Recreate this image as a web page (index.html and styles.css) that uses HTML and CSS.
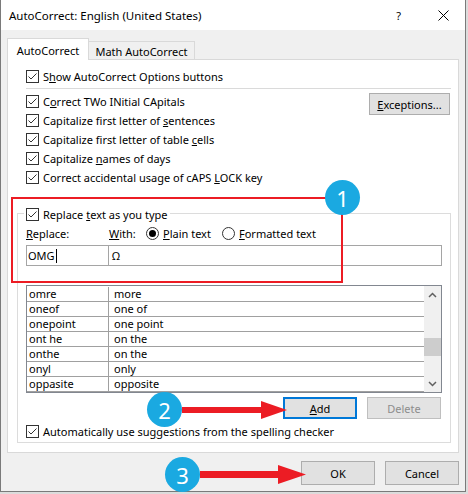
FILE: index.html
```html
<!DOCTYPE html>
<html>
<head>
<meta charset="utf-8">
<title>AutoCorrect</title>
<link rel="stylesheet" href="styles.css">
</head>
<body>
<div class="dialog">
  <div class="titlebar">
    <span class="title">AutoCorrect: English (United States)</span>
    <span class="help">?</span>
    <svg class="close" width="11" height="11" viewBox="0 0 11 11"><path d="M0.5 0.5 L10.5 10.5 M10.5 0.5 L0.5 10.5" stroke="#000" stroke-width="1" fill="none"/></svg>
  </div>
  <div class="body">
    <div class="tabs">
      <div class="tab active">AutoCorrect</div>
      <div class="tab">Math AutoCorrect</div>
    </div>
    <div class="panel">
      <div class="check-row show-row">
        <svg class="cb" width="13" height="13" viewBox="0 0 13 13"><rect x="0.5" y="0.5" width="12" height="12" fill="#fff" stroke="#333"/><path d="M2.5 6.5 L5 9 L10.5 3.5" fill="none" stroke="#333"/></svg>
        <span>S<u>h</u>ow AutoCorrect Options buttons</span>
      </div>
      <div class="sep"></div>
      <div class="top">
        <div class="checks">
          <div class="check-row">
            <svg class="cb" width="13" height="13" viewBox="0 0 13 13"><rect x="0.5" y="0.5" width="12" height="12" fill="#fff" stroke="#333"/><path d="M2.5 6.5 L5 9 L10.5 3.5" fill="none" stroke="#333"/></svg>
            <span>C<u>o</u>rrect TWo INitial CApitals</span>
          </div>
          <div class="check-row">
            <svg class="cb" width="13" height="13" viewBox="0 0 13 13"><rect x="0.5" y="0.5" width="12" height="12" fill="#fff" stroke="#333"/><path d="M2.5 6.5 L5 9 L10.5 3.5" fill="none" stroke="#333"/></svg>
            <span>Capitalize first letter of <u>s</u>entences</span>
          </div>
          <div class="check-row">
            <svg class="cb" width="13" height="13" viewBox="0 0 13 13"><rect x="0.5" y="0.5" width="12" height="12" fill="#fff" stroke="#333"/><path d="M2.5 6.5 L5 9 L10.5 3.5" fill="none" stroke="#333"/></svg>
            <span>Capitalize first letter of table <u>c</u>ells</span>
          </div>
          <div class="check-row">
            <svg class="cb" width="13" height="13" viewBox="0 0 13 13"><rect x="0.5" y="0.5" width="12" height="12" fill="#fff" stroke="#333"/><path d="M2.5 6.5 L5 9 L10.5 3.5" fill="none" stroke="#333"/></svg>
            <span>Capitalize <u>n</u>ames of days</span>
          </div>
          <div class="check-row">
            <svg class="cb" width="13" height="13" viewBox="0 0 13 13"><rect x="0.5" y="0.5" width="12" height="12" fill="#fff" stroke="#333"/><path d="M2.5 6.5 L5 9 L10.5 3.5" fill="none" stroke="#333"/></svg>
            <span>Correct accidental usage of cAPS <u>L</u>OCK key</span>
          </div>
        </div>
        <div class="btn exceptions"><span><u>E</u>xceptions...</span></div>
      </div>
      <div class="group">
        <div class="check-row legend">
          <svg class="cb" width="13" height="13" viewBox="0 0 13 13"><rect x="0.5" y="0.5" width="12" height="12" fill="#fff" stroke="#333"/><path d="M2.5 6.5 L5 9 L10.5 3.5" fill="none" stroke="#333"/></svg>
          <span>Replace <u>t</u>ext as you type</span>
        </div>
        <div class="labels">
          <span class="lbl-replace"><u>R</u>eplace:</span>
          <span class="lbl-with"><u>W</u>ith:</span>
          <span class="radio on"></span>
          <span class="lbl-plain"><u>P</u>lain text</span>
          <span class="radio"></span>
          <span class="lbl-formatted"><u>F</u>ormatted text</span>
        </div>
        <div class="inputs">
          <div class="input replace">OMG<span class="caret"></span></div>
          <div class="input with">Ω</div>
        </div>
        <div class="list">
          <div class="rows">
            <div class="row"><span class="c1">omre</span><span class="c2">more</span></div>
            <div class="row"><span class="c1">oneof</span><span class="c2">one of</span></div>
            <div class="row"><span class="c1">onepoint</span><span class="c2">one point</span></div>
            <div class="row"><span class="c1">ont he</span><span class="c2">on the</span></div>
            <div class="row"><span class="c1">onthe</span><span class="c2">on the</span></div>
            <div class="row"><span class="c1">onyl</span><span class="c2">only</span></div>
            <div class="row"><span class="c1">oppasite</span><span class="c2">opposite</span></div>
          </div>
          <div class="scrollbar">
            <div class="sb-btn"><svg width="9" height="6" viewBox="0 0 9 6"><path d="M1 5 L4.5 1.5 L8 5" fill="none" stroke="#606060" stroke-width="1.5"/></svg></div>
            <div class="sb-track"><div class="sb-thumb"></div></div>
            <div class="sb-btn"><svg width="9" height="6" viewBox="0 0 9 6"><path d="M1 1 L4.5 4.5 L8 1" fill="none" stroke="#606060" stroke-width="1.5"/></svg></div>
          </div>
        </div>
        <div class="actions">
          <div class="btn add"><span><u>A</u>dd</span></div>
          <div class="btn delete"><span>Delete</span></div>
        </div>
        <div class="check-row auto-row">
          <svg class="cb" width="13" height="13" viewBox="0 0 13 13"><rect x="0.5" y="0.5" width="12" height="12" fill="#fff" stroke="#333"/><path d="M2.5 6.5 L5 9 L10.5 3.5" fill="none" stroke="#333"/></svg>
          <span>Automatically use su<u>g</u>gestions from the spelling checker</span>
        </div>
      </div>
    </div>
    <div class="footer">
      <div class="btn ok"><span>OK</span></div>
      <div class="btn cancel"><span>Cancel</span></div>
    </div>
  </div>
</div>

<div class="mark-box"></div>
<div class="badge b1">1</div>
<div class="badge b2">2</div>
<div class="badge b3">3</div>
<svg class="arrows" width="468" height="494" viewBox="0 0 468 494">
  <rect x="182" y="407" width="80" height="6" fill="#ec1c24"/>
  <polygon points="261,401 287,410 261,419" fill="#ec1c24"/>
  <rect x="200" y="471" width="80" height="7" fill="#ec1c24"/>
  <polygon points="278,465 306,474.5 278,484" fill="#ec1c24"/>
</svg>
</body>
</html>
```

FILE: styles.css
```css
html, body {
  margin: 0;
  padding: 0;
}
body {
  width: 468px;
  height: 494px;
  overflow: hidden;
  position: relative;
  background: #dcdcdc;
  font-family: "Noto Sans", "Segoe UI", sans-serif;
  font-size: 11px;
  line-height: 15px;
  color: #000;
}
u {
  text-decoration: underline;
  text-underline-offset: 1px;
}
.dialog {
  width: 466px;
  height: 492px;
  box-sizing: border-box;
  border: 1px solid #7a7a7a;
  border-top: none;
  background: #f0f0f0;
  display: flex;
  flex-direction: column;
}
.titlebar {
  height: 30px;
  flex: none;
  background: #fff;
  display: flex;
  align-items: center;
  padding: 0 16px 0 8px;
}
.title {
  font-size: 11.5px;
}
.help {
  margin-left: auto;
  margin-right: 37px;
  font-size: 11px;
}
.close {
  display: block;
}
.body {
  flex: 1;
  display: flex;
  flex-direction: column;
  padding: 0 6px;
}
.tabs {
  display: flex;
  align-items: flex-end;
  margin-top: 8px;
  height: 21px;
}
.tab {
  box-sizing: border-box;
  border: 1px solid #d9d9d9;
  border-bottom: none;
  display: flex;
  justify-content: center;
  align-items: center;
  text-align: center;
  white-space: nowrap;
}
.tab.active {
  width: 82px;
  height: 22px;
  margin-bottom: -1px;
  background: #fff;
  position: relative;
  z-index: 1;
  padding-top: 2px;
}
.tab:not(.active) {
  width: 107px;
  height: 18px;
  margin-left: -1px;
  background: #f0f0f0;
  padding-top: 2px;
}
.panel {
  box-sizing: border-box;
  height: 394px;
  border: 1px solid #d9d9d9;
  background: #fff;
  display: flex;
  flex-direction: column;
  padding-left: 18px;
}
.check-row {
  display: flex;
  align-items: center;
  height: 19px;
  gap: 4px;
  white-space: nowrap;
}
.cb {
  display: block;
  flex: none;
}
.show-row {
  margin-top: 7px;
}
.sep {
  height: 1px;
  background: #dadada;
  margin: 2px 7px 0 0;
}
.top {
  display: flex;
  justify-content: space-between;
  align-items: flex-start;
  margin-top: 3px;
}
.btn {
  box-sizing: border-box;
  background: #e1e1e1;
  border: 1px solid #adadad;
  display: flex;
  align-items: center;
  justify-content: center;
  white-space: nowrap;
}
.exceptions {
  width: 81px;
  height: 22px;
  margin-top: 1px;
  margin-right: 8px;
}
.group {
  margin: 26px 7px 0 -9px;
  border: 1px solid #dcdcdc;
  padding: 0 8px 1px 8px;
  display: flex;
  flex-direction: column;
}
.legend {
  align-self: flex-start;
  margin-top: -9px;
  margin-left: -2px;
  padding: 0 2px;
  background: #fff;
}
.labels {
  display: flex;
  align-items: center;
  height: 19px;
  white-space: nowrap;
}
.lbl-replace {
  width: 83px;
}
.lbl-with {
  width: 37px;
}
.radio {
  box-sizing: border-box;
  width: 13px;
  height: 13px;
  border: 1px solid #333;
  border-radius: 50%;
  background: #fff;
  display: flex;
  align-items: center;
  justify-content: center;
  margin-right: 4px;
  flex: none;
}
.radio.on::after {
  content: "";
  width: 7px;
  height: 7px;
  border-radius: 50%;
  background: #000;
}
.lbl-plain {
  width: 59px;
}
.inputs {
  display: flex;
  margin-top: 2px;
  height: 21px;
}
.input {
  box-sizing: border-box;
  height: 21px;
  border: 1px solid #a5a5a5;
  background: #fff;
  display: flex;
  align-items: center;
}
.input.replace {
  width: 83px;
  padding-left: 1px;
}
.input.with {
  flex: 1;
  margin-left: -1px;
  padding-left: 3px;
}
.caret {
  width: 1px;
  height: 14px;
  background: #000;
  margin-left: 1px;
}
.list {
  box-sizing: border-box;
  height: 108px;
  margin-top: 19px;
  border: 1px solid #828790;
  display: flex;
}
.rows {
  flex: 1;
  padding-top: 1px;
}
.row {
  box-sizing: border-box;
  height: 15px;
  line-height: 14px;
  border-bottom: 1px solid #a0a0a0;
  display: flex;
  align-items: center;
  white-space: nowrap;
}
.c1 {
  box-sizing: border-box;
  width: 82px;
  height: 100%;
  border-right: 1px solid #a0a0a0;
  padding-left: 2px;
  display: flex;
  align-items: center;
}
.c2 {
  padding-left: 5px;
}
.scrollbar {
  width: 17px;
  background: #f0f0f0;
  display: flex;
  flex-direction: column;
}
.sb-btn {
  height: 17px;
  display: flex;
  align-items: center;
  justify-content: center;
}
.sb-track {
  flex: 1;
}
.sb-thumb {
  height: 18px;
  margin-top: 35px;
  background: #cdcdcd;
}
.actions {
  display: flex;
  justify-content: flex-end;
  gap: 10px;
  margin-top: 4px;
  padding-right: 1px;
}
.actions .btn {
  width: 74px;
  height: 22px;
}
.add {
  border: 2px solid #0078d7;
}
.delete {
  color: #8d8d8d;
  border-color: #bfbfbf;
  background: #e3e3e3;
}
.auto-row {
  margin-top: 3px;
}
.footer {
  display: flex;
  justify-content: flex-end;
  gap: 10px;
  margin-top: 8px;
}
.footer .btn {
  width: 74px;
  height: 24px;
}
.mark-box {
  position: absolute;
  left: 11px;
  top: 197px;
  width: 332px;
  height: 86px;
  box-sizing: border-box;
  border: 2px solid #ec1c24;
}
.badge {
  position: absolute;
  width: 35px;
  height: 35px;
  border-radius: 50%;
  background: #1aa9e1;
  color: #fff;
  font-size: 22px;
  display: flex;
  align-items: center;
  justify-content: center;
  line-height: 1;
}
.b1 { left: 325px; top: 180px; }
.b2 { left: 147px; top: 392px; }
.b3 { left: 165px; top: 457px; }
.arrows {
  position: absolute;
  left: 0;
  top: 0;
  pointer-events: none;
}
```
